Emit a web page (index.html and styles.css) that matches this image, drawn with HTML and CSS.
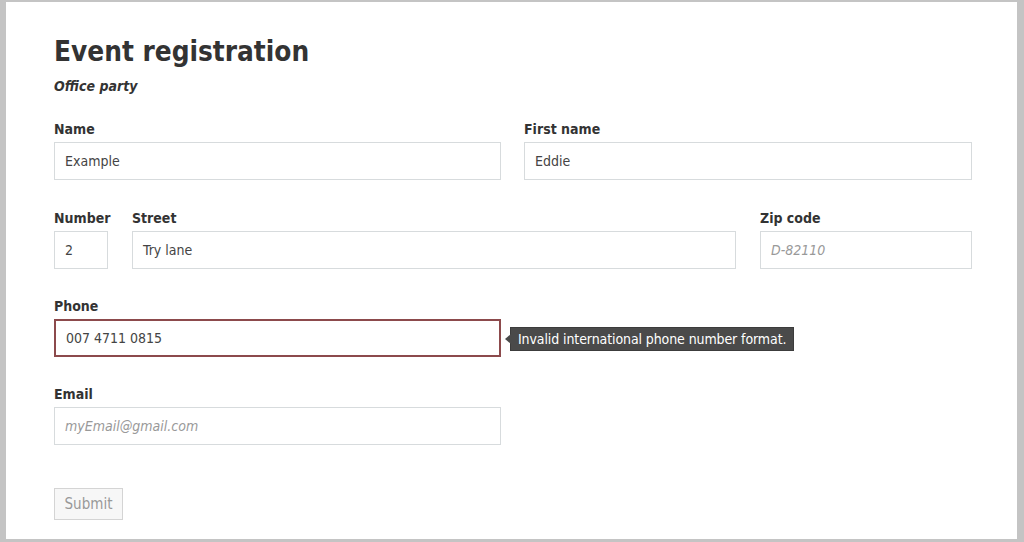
FILE: index.html
```html
<!DOCTYPE html>
<html>
<head>
<meta charset="utf-8">
<link rel="stylesheet" href="styles.css">
</head>
<body>
<div class="frame">
  <form class="form">
    <h1 class="title">Event registration</h1>
    <p class="subtitle">Office party</p>

    <div class="row two first">
      <div class="field">
        <label class="label">Name</label>
        <div class="input">Example</div>
      </div>
      <div class="field">
        <label class="label">First name</label>
        <div class="input">Eddie</div>
      </div>
    </div>

    <div class="row addr">
      <div class="field">
        <label class="label">Number</label>
        <div class="input">2</div>
      </div>
      <div class="field">
        <label class="label">Street</label>
        <div class="input">Try lane</div>
      </div>
      <div class="field">
        <label class="label">Zip code</label>
        <div class="input placeholder">D-82110</div>
      </div>
    </div>

    <div class="row two">
      <div class="field">
        <label class="label">Phone</label>
        <div class="input invalid">007 4711 0815</div>
      </div>
      <div class="field tipcell">
        <div class="tooltip">Invalid international phone number format.</div>
      </div>
    </div>

    <div class="row two">
      <div class="field">
        <label class="label">Email</label>
        <div class="input placeholder">myEmail@gmail.com</div>
      </div>
    </div>

    <div class="actions">
      <button type="button" class="submit">Submit</button>
    </div>
  </form>
</div>
</body>
</html>
```
FILE: styles.css
```css
html, body {
  margin: 0;
  padding: 0;
  background: #fff;
}
body {
  font-family: "DejaVu Sans Condensed", "DejaVu Sans", sans-serif;
  font-stretch: condensed;
  color: #333;
}
.frame {
  box-sizing: border-box;
  width: 1024px;
  height: 542px;
  border-style: solid;
  border-color: #c4c4c4;
  border-width: 2px 7px 3px 6px;
  background: #fff;
  overflow: hidden;
}
.form {
  padding: 32px 0 0 48px;
  width: 918px;
}
.title {
  margin: 0;
  font-size: 27.7px;
  line-height: 36px;
  font-weight: bold;
  color: #333;
}
.subtitle {
  margin: 6px 0 0;
  font-size: 14px;
  line-height: 20px;
  font-weight: bold;
  font-style: italic;
  color: #333;
}
.row {
  display: grid;
  margin-top: 27px;
}
.row.first {
  margin-top: 23px;
}
.row.addr {
  margin-top: 28px;
}
.row.two {
  grid-template-columns: 447px 448px;
  column-gap: 23px;
}
.row.addr {
  grid-template-columns: 54px 604px 212px;
  column-gap: 24px;
}
.field {
  display: flex;
  flex-direction: column;
}
.label {
  font-size: 14px;
  line-height: 20px;
  font-weight: bold;
  color: #333;
  height: 20px;
  margin-bottom: 3px;
}
.input {
  box-sizing: border-box;
  height: 38px;
  border: 1px solid #d7dbdd;
  padding: 0 10px;
  font-size: 14px;
  line-height: 36px;
  color: #444;
  background: #fff;
}
.input.placeholder {
  font-style: italic;
  color: #999;
}
.input.invalid {
  border: 2px solid #8c4a4c;
  line-height: 34px;
  padding: 0 10px;
}
.tipcell {
  justify-content: flex-end;
  padding-bottom: 6px;
  margin-left: -14px;
}
.tooltip {
  position: relative;
  align-self: flex-start;
  background: #4a4a4a;
  color: #fff;
  font-size: 14px;
  letter-spacing: -0.1px;
  line-height: 22px;
  padding: 0 7px 0 7px;
  border: 1px solid #3c3c3c;
}
.tooltip::before {
  content: "";
  position: absolute;
  left: -6px;
  top: 6px;
  border-style: solid;
  border-width: 5px 6px 5px 0;
  border-color: transparent #4a4a4a transparent transparent;
}
.actions {
  margin-top: 43px;
}
.submit {
  box-sizing: border-box;
  width: 69px;
  height: 32px;
  font-family: "DejaVu Sans Condensed", "DejaVu Sans", sans-serif;
  font-stretch: condensed;
  font-size: 15px;
  color: #999;
  background: #f7f7f7;
  border: 1px solid #d4d4d4;
  padding: 0;
}
```
